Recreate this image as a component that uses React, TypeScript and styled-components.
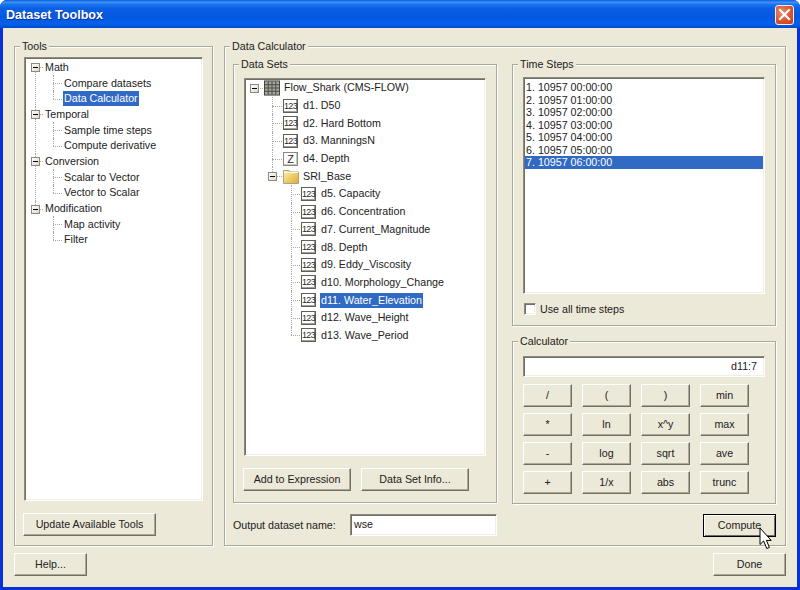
import React from 'react';
import styled, { createGlobalStyle } from 'styled-components';

const GlobalStyle = createGlobalStyle`
  html, body {
    margin: 0;
    padding: 0;
    background: #fff;
  }
  * {
    box-sizing: border-box;
  }
`;

const toolTree = [
  { label: 'Math', items: ['Compare datasets', 'Data Calculator'] },
  { label: 'Temporal', items: ['Sample time steps', 'Compute derivative'] },
  { label: 'Conversion', items: ['Scalar to Vector', 'Vector to Scalar'] },
  { label: 'Modification', items: ['Map activity', 'Filter'] },
];

const flowSets = ['d1. D50', 'd2. Hard Bottom', 'd3. ManningsN'];
const sriSets = [
  'd5. Capacity',
  'd6. Concentration',
  'd7. Current_Magnitude',
  'd8. Depth',
  'd9. Eddy_Viscosity',
  'd10. Morphology_Change',
  'd11. Water_Elevation',
  'd12. Wave_Height',
  'd13. Wave_Period',
];
const timeSteps = [
  '1. 10957 00:00:00',
  '2. 10957 01:00:00',
  '3. 10957 02:00:00',
  '4. 10957 03:00:00',
  '5. 10957 04:00:00',
  '6. 10957 05:00:00',
  '7. 10957 06:00:00',
];
const calcKeys = ['/', '(', ')', 'min', '*', 'ln', 'x^y', 'max', '-', 'log', 'sqrt', 'ave', '+', '1/x', 'abs', 'trunc'];

const GridIcon = () => (
  <svg width="17" height="16" viewBox="0 0 17 16">
    <rect x="0.5" y="0.5" width="16" height="15" fill="#a8a79f" stroke="#3c3c38" />
    <path d="M4.5 1V15M8.5 1V15M12.5 1V15M1 4.5H16M1 8H16M1 11.5H16" stroke="#45453f" fill="none" />
  </svg>
);

const FolderIcon = () => (
  <svg width="16" height="15" viewBox="0 0 16 15">
    <defs>
      <linearGradient id="folderFill" x1="0" y1="0" x2="1" y2="1">
        <stop offset="0" stopColor="#fff3b0" />
        <stop offset="1" stopColor="#e2a92c" />
      </linearGradient>
    </defs>
    <path d="M0.5 3V1.5H6L7 3H15.5V14.5H0.5Z" fill="url(#folderFill)" stroke="#a8a48c" />
    <path d="M1 3.5H15" stroke="#fffbe0" />
  </svg>
);

const CursorIcon = () => (
  <svg width="14" height="23" viewBox="0 0 14 23">
    <path d="M1 1V17.5L4.6 14L7.8 21.5L10.4 20.4L7.4 13.4H12.2Z" fill="#fff" stroke="#000" strokeWidth="1" />
  </svg>
);

export default function App() {
  return (
    <>
      <GlobalStyle />
      <Window>
        <TitleBar>
          <TitleText>Dataset Toolbox</TitleText>
          <CloseButton aria-label="Close">
            <svg width="13" height="13" viewBox="0 0 13 13">
              <path d="M2 2L11 11M11 2L2 11" stroke="#fff" strokeWidth="2.2" strokeLinecap="square" />
            </svg>
          </CloseButton>
        </TitleBar>
        <Body>
          <MainRow>
            <ToolsGroup>
              <GroupLabel>Tools</GroupLabel>
              <ToolsTree $row={15.7}>
                {toolTree.map(group => (
                  <Node key={group.label}>
                    <Row $pad={9}>
                      <Expander />
                      <Label>{group.label}</Label>
                    </Row>
                    <Children>
                      {group.items.map(item => (
                        <Node key={item}>
                          <Row $pad={10}>
                            <Label $selected={item === 'Data Calculator'}>{item}</Label>
                          </Row>
                        </Node>
                      ))}
                    </Children>
                  </Node>
                ))}
              </ToolsTree>
              <UpdateButton>Update Available Tools</UpdateButton>
            </ToolsGroup>

            <CalcGroup>
              <GroupLabel>Data Calculator</GroupLabel>
              <Column>
                <DataSetsGroup>
                  <GroupLabel>Data Sets</GroupLabel>
                  <DataTree $row={17.7}>
                    <Node>
                      <Row $pad={10}>
                        <Expander />
                        <IconSlot><GridIcon /></IconSlot>
                        <Label>Flow_Shark (CMS-FLOW)</Label>
                      </Row>
                      <Children>
                        {flowSets.map(name => (
                          <Node key={name}>
                            <Row $pad={11}>
                              <TypeIcon>123</TypeIcon>
                              <Label>{name}</Label>
                            </Row>
                          </Node>
                        ))}
                        <Node>
                          <Row $pad={11}>
                            <TypeIcon $letter>Z</TypeIcon>
                            <Label>d4. Depth</Label>
                          </Row>
                        </Node>
                        <Node>
                          <Row $pad={11}>
                            <Expander />
                            <IconSlot><FolderIcon /></IconSlot>
                            <Label>SRI_Base</Label>
                          </Row>
                          <Children $extra={1}>
                            {sriSets.map(name => (
                              <Node key={name}>
                                <Row $pad={10}>
                                  <TypeIcon>123</TypeIcon>
                                  <Label $selected={name === 'd11. Water_Elevation'}>{name}</Label>
                                </Row>
                              </Node>
                            ))}
                          </Children>
                        </Node>
                      </Children>
                    </Node>
                  </DataTree>
                  <ButtonRow>
                    <WideButton>Add to Expression</WideButton>
                    <WideButton>Data Set Info...</WideButton>
                  </ButtonRow>
                </DataSetsGroup>
                <OutputRow>
                  <span>Output dataset name:</span>
                  <OutputInput value="wse" readOnly />
                </OutputRow>
              </Column>

              <Column>
                <TimeStepsGroup>
                  <GroupLabel>Time Steps</GroupLabel>
                  <TimeList>
                    {timeSteps.map((step, i) => (
                      <TimeRow key={step} $selected={i === timeSteps.length - 1}>{step}</TimeRow>
                    ))}
                  </TimeList>
                  <CheckRow>
                    <CheckBox />
                    Use all time steps
                  </CheckRow>
                </TimeStepsGroup>

                <CalculatorGroup>
                  <GroupLabel>Calculator</GroupLabel>
                  <Display>d11:7</Display>
                  <KeyGrid>
                    {calcKeys.map(key => (
                      <KeyButton key={key}>{key}</KeyButton>
                    ))}
                  </KeyGrid>
                </CalculatorGroup>

                <ComputeRow>
                  <ComputeButton>
                    Compute
                    <CursorSlot><CursorIcon /></CursorSlot>
                  </ComputeButton>
                </ComputeRow>
              </Column>
            </CalcGroup>
          </MainRow>

          <Footer>
            <FooterButton>Help...</FooterButton>
            <FooterButton>Done</FooterButton>
          </Footer>
        </Body>
      </Window>
    </>
  );
}

const Window = styled.div`
  width: 800px;
  height: 590px;
  display: flex;
  flex-direction: column;
  background: #0831d9;
  border-radius: 7px 7px 0 0;
  overflow: hidden;
  font-family: "Liberation Sans", Arial, sans-serif;
  font-size: 10.7px;
  color: #222;
`;

const TitleBar = styled.div`
  height: 28px;
  flex: none;
  display: flex;
  align-items: center;
  justify-content: space-between;
  padding: 0 6px 0 6px;
  background: linear-gradient(
    to bottom,
    #0a5be0 0%,
    #3d93f7 8%,
    #1a74ee 16%,
    #0a5fe4 30%,
    #0458e0 60%,
    #0560ea 85%,
    #0249cf 100%
  );
`;

const TitleText = styled.div`
  padding-top: 2px;
  font-size: 12.6px;
  font-weight: bold;
  color: #fff;
  text-shadow: 1px 1px 0 #0f2f9a;
`;

const CloseButton = styled.button`
  width: 19px;
  height: 20px;
  margin-top: 1px;
  padding: 0;
  display: flex;
  align-items: center;
  justify-content: center;
  border: 1px solid #f4efe8;
  border-radius: 3px;
  background: radial-gradient(circle at 35% 35%, #ea8d6e 0%, #d9542f 55%, #c23a1c 100%);
`;

const Body = styled.div`
  flex: 1;
  margin: 0 3px 3px;
  padding: 18px 11px 11px;
  display: flex;
  flex-direction: column;
  gap: 7px;
  background: #ece9d8;
`;

const MainRow = styled.div`
  display: flex;
  gap: 11px;
  height: 500px;
`;

const GroupBox = styled.div`
  position: relative;
  flex: none;
  border: 1px solid #aca899;
  box-shadow: 1px 1px 0 #fff, inset 1px 1px 0 #fff;
`;

const GroupLabel = styled.span`
  position: absolute;
  top: -7px;
  left: 5px;
  padding: 0 2px;
  line-height: 13px;
  background: #ece9d8;
`;

const ToolsGroup = styled(GroupBox)`
  width: 199px;
  padding: 10px 9px 9px;
  display: flex;
  flex-direction: column;
  align-items: flex-start;
`;

const Sunken = styled.div`
  background: #fff;
  border: 1px solid;
  border-color: #8d8b7e #fff #fff #8d8b7e;
  box-shadow: inset 1px 1px 0 #716f64, inset -1px -1px 0 #f1efe2;
`;

const TreeBox = styled(Sunken)<{ $row: number }>`
  --row: ${p => p.$row}px;
  & > div:first-child::before {
    top: calc(var(--row) / 2);
  }
  & > div:only-child::before {
    display: none;
  }
`;

const ToolsTree = styled(TreeBox)`
  width: 179px;
  height: 444px;
  padding: 1.5px 0 0 10px;
  margin-bottom: 12px;
`;

const DataTree = styled(TreeBox)`
  width: 242px;
  height: 378px;
  padding: 0 0 0 9px;
`;

const Node = styled.div`
  position: relative;
  &::before {
    content: '';
    position: absolute;
    left: 0;
    top: 0;
    bottom: 0;
    border-left: 1px dotted #a8a8a8;
  }
  &:last-child::before {
    bottom: auto;
    height: calc(var(--row) / 2);
  }
`;

const Row = styled.div<{ $pad: number }>`
  position: relative;
  z-index: 1;
  height: var(--row);
  display: flex;
  align-items: center;
  gap: 3px;
  padding-left: ${p => p.$pad}px;
  &::before {
    content: '';
    position: absolute;
    left: 0;
    top: 50%;
    width: ${p => p.$pad - 1}px;
    border-top: 1px dotted #a8a8a8;
  }
`;

const Children = styled.div<{ $extra?: number }>`
  position: relative;
  margin-left: ${p => 18 + (p.$extra || 0)}px;
`;

const Expander = styled.span`
  position: absolute;
  z-index: 2;
  left: -4px;
  top: 50%;
  width: 9px;
  height: 9px;
  margin-top: -4px;
  border: 1px solid #8a8a80;
  background: linear-gradient(135deg, #fff, #dcd8c8);
  &::after {
    content: '';
    position: absolute;
    left: 1px;
    top: 3px;
    width: 5px;
    height: 1px;
    background: #000;
  }
`;

const Label = styled.span<{ $selected?: boolean }>`
  padding: 1px 1px;
  white-space: nowrap;
  line-height: 13px;
  background: ${p => (p.$selected ? '#316ac5' : 'transparent')};
  color: ${p => (p.$selected ? '#fff' : 'inherit')};
`;

const IconSlot = styled.span`
  display: flex;
  flex: none;
  width: 16px;
`;

const TypeIcon = styled.span<{ $letter?: boolean }>`
  flex: none;
  width: 15px;
  height: 14px;
  margin-right: 1px;
  display: flex;
  align-items: center;
  justify-content: center;
  border: 1px solid ${p => (p.$letter ? '#8a8a82' : '#5f5f58')};
  box-shadow: inset -1px -1px 0 ${p => (p.$letter ? '#c8c8c0' : '#a0a098')};
  background: #fff;
  font-family: ${p => (p.$letter ? 'inherit' : '"Liberation Sans Narrow", "Liberation Sans", sans-serif')};
  font-size: ${p => (p.$letter ? '11px' : '9px')};
  letter-spacing: ${p => (p.$letter ? '0' : '-0.6px')};
  color: #2a2a2a;
`;

const Button = styled.button`
  padding: 0 0 2px;
  height: 23px;
  font: inherit;
  color: inherit;
  background: #ece9d8;
  border: 1px solid;
  border-color: #fff #716f64 #716f64 #fff;
  box-shadow: inset -1px -1px 0 #aca899;
`;

const UpdateButton = styled(Button)`
  width: 133px;
  margin-left: -1px;
`;

const CalcGroup = styled(GroupBox)`
  width: 562px;
  padding: 17px 8px 9px;
  display: flex;
  gap: 15px;
`;

const Column = styled.div`
  width: 264px;
  display: flex;
  flex-direction: column;
`;

const DataSetsGroup = styled(GroupBox)`
  flex: 1;
  padding: 13px 10px 10px;
`;

const ButtonRow = styled.div`
  display: flex;
  gap: 10px;
  margin: 12px 0 0 -1px;
`;

const WideButton = styled(Button)`
  width: 108px;
`;

const OutputRow = styled.div`
  height: 22px;
  margin-top: 11px;
  display: flex;
  align-items: center;
  justify-content: space-between;
`;

const OutputInput = styled.input`
  width: 147px;
  height: 22px;
  padding: 0 0 2px 3px;
  font: inherit;
  color: inherit;
  background: #fff;
  outline: none;
  border: 1px solid;
  border-color: #8d8b7e #fff #fff #8d8b7e;
  box-shadow: inset 1px 1px 0 #716f64, inset -1px -1px 0 #f1efe2;
`;

const TimeStepsGroup = styled(GroupBox)`
  height: 262px;
  padding: 12px 10px 0;
`;

const TimeList = styled(Sunken)`
  height: 217px;
  padding: 3px 1px 0 1px;
`;

const TimeRow = styled.div<{ $selected?: boolean }>`
  height: 12.5px;
  line-height: 12.5px;
  padding-left: 1px;
  background: ${p => (p.$selected ? '#316ac5' : 'transparent')};
  color: ${p => (p.$selected ? '#fff' : 'inherit')};
`;

const CheckRow = styled.label`
  display: flex;
  align-items: center;
  gap: 4px;
  margin-top: 8px;
  height: 13px;
`;

const CheckBox = styled.span`
  width: 12px;
  height: 12px;
  margin-left: 1px;
  background: #fff;
  border: 1px solid;
  border-color: #8d8b7e #fff #fff #8d8b7e;
  box-shadow: inset 1px 1px 0 #716f64, inset -1px -1px 0 #f1efe2;
`;

const CalculatorGroup = styled(GroupBox)`
  height: 163px;
  margin-top: 15px;
  padding: 14px 10px 0;
`;

const Display = styled(Sunken)`
  height: 21px;
  line-height: 18px;
  padding-right: 7px;
  text-align: right;
`;

const KeyGrid = styled.div`
  display: grid;
  grid-template-columns: repeat(4, 49px);
  grid-auto-rows: 23px;
  gap: 6px 10px;
  margin-top: 7px;
`;

const KeyButton = styled(Button)``;

const ComputeRow = styled.div`
  margin-top: 10px;
  display: flex;
  justify-content: flex-end;
`;

const ComputeButton = styled(Button)`
  position: relative;
  width: 73px;
  outline: none;
  border: 1px solid #000;
  box-shadow: inset 1px 1px 0 #fff, inset -1px -1px 0 #716f64;
`;

const CursorSlot = styled.span`
  position: absolute;
  left: 55px;
  top: 12px;
  display: flex;
`;

const Footer = styled.div`
  display: flex;
  justify-content: space-between;
`;

const FooterButton = styled(Button)`
  width: 73px;
`;
